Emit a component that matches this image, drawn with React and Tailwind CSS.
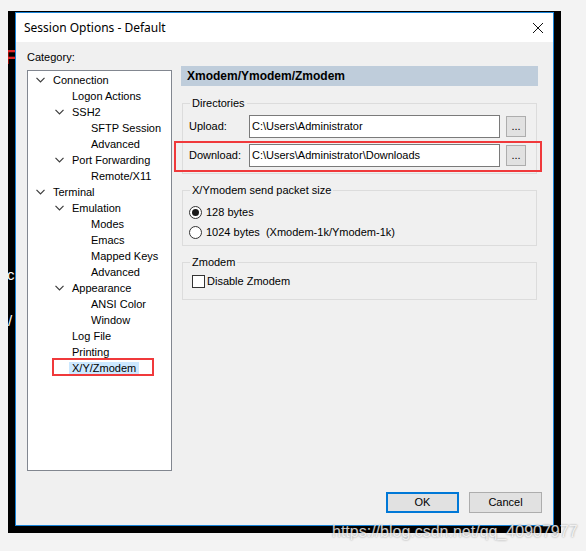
import React from 'react'

const tree = [
  { label: 'Connection', level: 0, open: true },
  { label: 'Logon Actions', level: 1 },
  { label: 'SSH2', level: 1, open: true },
  { label: 'SFTP Session', level: 2 },
  { label: 'Advanced', level: 2 },
  { label: 'Port Forwarding', level: 1, open: true },
  { label: 'Remote/X11', level: 2 },
  { label: 'Terminal', level: 0, open: true },
  { label: 'Emulation', level: 1, open: true },
  { label: 'Modes', level: 2 },
  { label: 'Emacs', level: 2 },
  { label: 'Mapped Keys', level: 2 },
  { label: 'Advanced', level: 2 },
  { label: 'Appearance', level: 1, open: true },
  { label: 'ANSI Color', level: 2 },
  { label: 'Window', level: 2 },
  { label: 'Log File', level: 1 },
  { label: 'Printing', level: 1 },
  { label: 'X/Y/Zmodem', level: 1, selected: true },
]

const indent = ['pl-0', 'pl-[19px]', 'pl-[38px]']

const Chevron = () => (
  <svg width="9" height="6" viewBox="0 0 9 6" className="block">
    <path d="M0.5 0.8 L4.5 4.8 L8.5 0.8" fill="none" stroke="#3c3c3c" strokeWidth="1.2" />
  </svg>
)

const Radio = ({ checked }) => (
  <span className="flex h-[13px] w-[13px] items-center justify-center rounded-full border border-[#333] bg-white">
    {checked && <span className="h-[7px] w-[7px] rounded-full bg-[#1a1a1a]" />}
  </span>
)

const PathRow = ({ label, value }) => (
  <div className="flex h-[23px] items-center">
    <span className="w-[60px]">{label}</span>
    <div className="flex h-[23px] w-[251px] items-center border border-[#7a7a7a] bg-white pl-[2px]">{value}</div>
    <button className="ml-[6px] h-[21px] w-[20px] border border-[#adadad] bg-[#e1e1e1] leading-[17px]">...</button>
  </div>
)

const App = () => {
  return (
    <div className="relative h-[551px] w-[586px] overflow-hidden bg-[#f3f3f3] font-['Liberation_Sans',Arial,sans-serif] text-[11px] text-black">
      <div className="pl-2 pt-[11px]">
        <div className="relative h-[522px] w-[553px] overflow-hidden bg-black pl-[7px] pt-px">
          {/* bits of the terminal behind */}
          <span className="absolute left-[-4px] top-[31px] text-[20px] font-bold text-[#e02424]">F</span>
          <span className="absolute left-[-1px] top-[253px] text-[15px] text-white">c</span>
          <span className="absolute left-[0px] top-[299px] text-[15px] text-white">/</span>

          <div className="relative z-10 flex h-[514px] w-[539px] flex-col border border-[#1883d7] bg-[#f0f0f0]">
            <div className="flex h-[29px] items-center justify-between bg-white pl-2 pr-[10px] font-['Noto_Sans',sans-serif] text-[12px]">
              <span>Session Options - Default</span>
              <svg width="10" height="10" viewBox="0 0 10 10">
                <path d="M0 0 L10 10 M10 0 L0 10" stroke="#111" strokeWidth="1" />
              </svg>
            </div>

            <div className="flex flex-1 flex-col pl-[11px] pr-[11px]">
              <div className="flex gap-[9px]">
                <div className="pt-[7px]">
                  <div className="mb-[5px] leading-4">Category:</div>
                  <div className="h-[401px] w-[145px] border border-[#828790] bg-white pt-px">
                    {tree.map((n, i) => (
                      <div key={i} className={`flex h-4 items-center ${indent[n.level]}`}>
                        <span className="flex w-[25px] justify-center">{n.open && <Chevron />}</span>
                        <span className={n.selected ? '-ml-[3px] bg-[#cce8ff] px-[3px] leading-[13px]' : ''}>{n.label}</span>
                      </div>
                    ))}
                  </div>
                </div>

                <div className="w-[357px] pt-[24px]">
                  <div className="h-5 bg-[#bfcddb] pl-[6px] text-[12px] font-bold leading-5">Xmodem/Ymodem/Zmodem</div>

                  <fieldset className="ml-px mt-[9px] w-[355px] border border-[#dcdcdc] pb-[6px] pl-[6px] pt-[4px]">
                    <legend className="ml-px px-[2px] leading-4">Directories</legend>
                    <div className="flex flex-col gap-[6px]">
                      <PathRow label="Upload:" value="C:\Users\Administrator" />
                      <PathRow label="Download:" value="C:\Users\Administrator\Downloads" />
                    </div>
                  </fieldset>

                  <fieldset className="ml-px mt-[8px] w-[355px] border border-[#dcdcdc] pb-[3px] pl-[6px] pt-[4px]">
                    <legend className="ml-px px-[2px] leading-4">X/Ymodem send packet size</legend>
                    <div className="flex h-5 items-center gap-[4px]">
                      <Radio checked />
                      <span>128 bytes</span>
                    </div>
                    <div className="flex h-5 items-center gap-[4px]">
                      <Radio />
                      <span className="whitespace-pre">1024 bytes  (Xmodem-1k/Ymodem-1k)</span>
                    </div>
                  </fieldset>

                  <fieldset className="ml-px mt-[8px] w-[355px] border border-[#dcdcdc] pb-[9px] pl-[9px] pt-[2px]">
                    <legend className="ml-[-2px] px-[2px] leading-4">Zmodem</legend>
                    <div className="flex h-[18px] items-center gap-[2px]">
                      <span className="h-[13px] w-[13px] border border-[#333] bg-white" />
                      <span>Disable Zmodem</span>
                    </div>
                  </fieldset>
                </div>
              </div>

              <div className="mt-auto flex justify-end gap-[10px] pb-[12px]">
                <button className="h-[21px] w-[73px] border-2 border-[#0078d7] bg-[#e1e1e1]">OK</button>
                <button className="h-[21px] w-[73px] border border-[#adadad] bg-[#e1e1e1]">Cancel</button>
              </div>
            </div>
          </div>
        </div>
      </div>

      {/* red annotation boxes */}
      <div className="absolute left-[174px] top-[141px] z-20 h-[31px] w-[368px] border-2 border-[#f0393b]" />
      <div className="absolute left-[52px] top-[358px] z-20 h-[18px] w-[102px] border-2 border-[#f0393b]" />

      {/* watermark */}
      <div className="absolute left-[332px] top-[522px] z-20 text-[16px] leading-5 text-white/80 [text-shadow:0_0_2px_rgba(0,0,0,0.45)]">
        https://blog.csdn.net/qq_40907977
      </div>
    </div>
  )
}

export default App
